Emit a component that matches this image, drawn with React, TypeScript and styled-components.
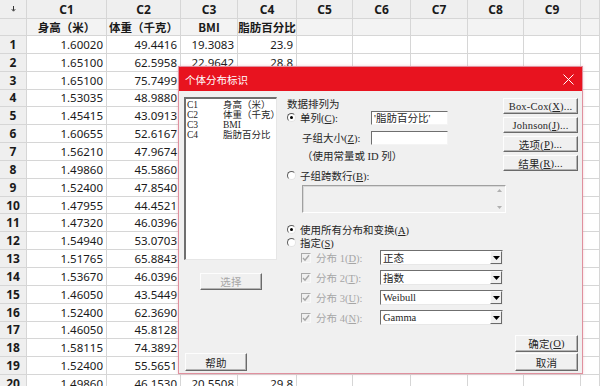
import React from 'react';
import styled, { createGlobalStyle } from 'styled-components';

const Global = createGlobalStyle`
  html, body { margin: 0; padding: 0; background: #fff; overflow: hidden; }
  body { width: 600px; height: 386px; font-family: "Noto Sans", "Noto Sans CJK SC", sans-serif; }
  * { box-sizing: border-box; }
`;

const Page = styled.div`
  position: relative;
  width: 600px;
  height: 386px;
  overflow: hidden;
  background: #fff;
`;

const Sheet = styled.div`
  display: grid;
  grid-template-columns: 27px 80px 74px 57px 59px 56px 58px 57px 56px 57px 1fr;
  grid-template-rows: 19px 17px repeat(20, 17.85px);
`;

type Kind = 'corner' | 'col' | 'name' | 'row' | 'data';

const Cell = styled.div<{ $kind: Kind }>`
  border-right: 1px solid #d6d6d6;
  border-bottom: 1px solid #d6d6d6;
  display: flex;
  align-items: center;
  overflow: hidden;
  white-space: nowrap;
  color: #1a1a1a;
  background: ${p => (p.$kind === 'data' ? '#fff' : p.$kind === 'name' ? '#f3f3f3' : '#efefef')};
  justify-content: ${p => (p.$kind === 'data' ? 'flex-end' : 'center')};
  padding-right: ${p => (p.$kind === 'data' ? '3px' : '0')};
  font-size: ${p => (p.$kind === 'data' ? '11.5px' : p.$kind === 'name' ? '11.5px' : '12px')};
  font-weight: ${p => (p.$kind === 'data' ? 400 : 700)};
  font-family: ${p => (p.$kind === 'name' ? '"Noto Sans CJK SC", sans-serif' : '"Noto Sans", sans-serif')};
`;

const heights = ['1.60020','1.65100','1.65100','1.53035','1.45415','1.60655','1.56210','1.49860','1.52400','1.47955','1.47320','1.54940','1.51765','1.53670','1.46050','1.52400','1.46050','1.58115','1.52400','1.49860'];
const weights = ['49.4416','62.5958','75.7499','48.9880','43.0913','52.6167','47.9674','45.5860','47.8540','44.4521','46.0396','53.0703','65.8843','46.0396','43.5449','62.3690','45.8128','74.3892','55.5651','46.1530'];
const fat: Record<number, string> = { 0: '23.9', 1: '28.8', 19: '29.8' };

const colNames = ['C1', 'C2', 'C3', 'C4', 'C5', 'C6', 'C7', 'C8', 'C9', ''];
const varNames = ['身高（米）', '体重（千克）', 'BMI', '脂肪百分比', '', '', '', '', '', ''];

/* ---------- Dialog ---------- */

const Dialog = styled.div`
  position: absolute;
  left: 178px;
  top: 66px;
  width: 405px;
  height: 308px;
  border: 1px solid #e0909e;
  background: #f0f0f0;
  box-shadow: 0 0 3px rgba(220, 120, 140, 0.35);
  display: flex;
  flex-direction: column;
  font-family: "Liberation Serif", "Noto Sans CJK SC", serif;
  font-size: 10.5px;
  color: #262626;
`;

const TitleBar = styled.div`
  height: 24px;
  flex: none;
  background: #e8131f;
  color: #fff;
  display: flex;
  align-items: center;
  justify-content: space-between;
  padding: 0 8px 0 6px;
  font-family: "Noto Sans CJK SC", sans-serif;
  font-size: 10.5px;
`;

const Body = styled.div`
  flex: 1;
  display: flex;
  padding: 6px 4px 2px 5px;
`;

const LeftCol = styled.div`
  width: 93px;
  display: flex;
  flex-direction: column;
  flex: none;
`;

const MidCol = styled.div`
  width: 216px;
  margin-left: 10px;
  display: flex;
  flex-direction: column;
  flex: none;
`;

const RightCol = styled.div`
  width: 75px;
  display: flex;
  flex-direction: column;
  flex: none;
  gap: 3px;
  padding-top: 1px;
`;

const ListBox = styled.div`
  height: 163px;
  background: #fff;
  border-style: solid;
  border-width: 2px 1px 1px 2px;
  border-color: #6f6f6f #e6e6e6 #e6e6e6 #6f6f6f;
  padding: 1px 0 0 1px;
  display: grid;
  grid-template-columns: 36px 1fr;
  grid-auto-rows: 10px;
  align-content: start;
  font-size: 9.5px;
  line-height: 10px;
`;

const ListText = styled.span`
  white-space: nowrap;
`;

const Button = styled.div<{ $w: number; $h: number; $off?: boolean }>`
  width: ${p => p.$w}px;
  height: ${p => p.$h}px;
  flex: none;
  display: flex;
  align-items: center;
  justify-content: center;
  background: #f0f0f0;
  border: 1px solid;
  border-color: #fdfdfd #6a6a6a #6a6a6a #fdfdfd;
  box-shadow: inset -1px -1px 0 #b4b4b4;
  color: ${p => (p.$off ? '#a6a6a6' : '#262626')};
  white-space: nowrap;
  letter-spacing: 0.2px;
`;

const SelectWrap = styled.div`
  margin: 13px 0 0 16px;
`;

const HelpWrap = styled.div`
  margin: auto 0 0 1px;
`;

const BottomButtons = styled.div`
  margin-top: auto;
  display: flex;
  flex-direction: column;
  align-items: flex-end;
  gap: 1px;
`;

const Row = styled.div<{ $h: number; $mt?: number; $indent?: number }>`
  height: ${p => p.$h}px;
  margin-top: ${p => p.$mt ?? 0}px;
  padding-left: ${p => p.$indent ?? 0}px;
  display: flex;
  align-items: center;
  white-space: nowrap;
  flex: none;
`;

const Label = styled.span<{ $w?: number; $off?: boolean }>`
  width: ${p => (p.$w ? `${p.$w}px` : 'auto')};
  flex: none;
  color: ${p => (p.$off ? '#a6a6a6' : '#262626')};
  white-space: nowrap;
`;

const RadioDot = styled.span<{ $on?: boolean }>`
  position: relative;
  width: 9px;
  height: 9px;
  flex: none;
  border-radius: 50%;
  border: 1px solid;
  border-color: #5e5e5e #e4e4e4 #e4e4e4 #5e5e5e;
  background: #fff;
  margin: 0 4px 0 0;
  &::after {
    content: '';
    display: ${p => (p.$on ? 'block' : 'none')};
    position: absolute;
    left: 2px;
    top: 2px;
    width: 3px;
    height: 3px;
    border-radius: 50%;
    background: #000;
  }
`;

const CheckBox = styled.span`
  width: 10px;
  height: 10px;
  flex: none;
  border: 1px solid;
  border-color: #a8a8a8 #f8f8f8 #f8f8f8 #a8a8a8;
  background: #f0f0f0;
  margin-right: 5px;
  display: flex;
  align-items: center;
  justify-content: center;
`;

const TextInput = styled.div<{ $w: number }>`
  width: ${p => p.$w}px;
  height: 14px;
  background: #fff;
  border: 1px solid;
  border-color: #6f6f6f #f4f4f4 #f4f4f4 #6f6f6f;
  display: flex;
  align-items: center;
  padding-left: 2px;
  font-size: 10.5px;
`;

const TextArea = styled.div`
  height: 28px;
  margin: 3px -3px 0 15px;
  border: 1px solid;
  border-color: #a0a0a0 #ffffff #ffffff #a0a0a0;
  box-shadow: inset 1px 1px 0 #d8d8d8;
  display: flex;
  justify-content: flex-end;
`;

const MiniScroll = styled.div`
  width: 12px;
  display: flex;
  flex-direction: column;
  justify-content: space-between;
  align-items: center;
  padding: 3px 0 3px;
`;

const Combo = styled.div`
  width: 123px;
  height: 15px;
  background: #fff;
  border: 1px solid;
  border-color: #6f6f6f #e8e8e8 #e8e8e8 #6f6f6f;
  display: flex;
  align-items: stretch;
`;

const ComboText = styled.span`
  flex: 1;
  padding-left: 2px;
  display: flex;
  align-items: center;
  font-size: 10.5px;
`;

const ComboArrow = styled.span`
  width: 12px;
  background: #f0f0f0;
  border: 1px solid;
  border-color: #fdfdfd #6a6a6a #6a6a6a #fdfdfd;
  display: flex;
  align-items: center;
  justify-content: center;
`;

const Arrow = () => (
  <svg width="7" height="4" viewBox="0 0 7 4">
    <path d="M0 0h7L3.5 4z" fill="#000" />
  </svg>
);

const Tri = ({ up }: { up?: boolean }) => (
  <svg width="5" height="3" viewBox="0 0 5 3">
    <path d={up ? 'M0 3h5L2.5 0z' : 'M0 0h5L2.5 3z'} fill="#b0b0b0" />
  </svg>
);

const Check = () => (
  <svg width="8" height="8" viewBox="0 0 8 8">
    <path d="M1 4l2 2.2L7 1.2" stroke="#a6a6a6" strokeWidth="1.4" fill="none" />
  </svg>
);

const CloseIcon = () => (
  <svg width="11" height="11" viewBox="0 0 11 11">
    <path d="M0.5 0.5l10 10M10.5 0.5l-10 10" stroke="#fff" strokeWidth="1" />
  </svg>
);

const Corner = () => (
  <svg width="5" height="6" viewBox="0 0 5 6">
    <path d="M2.5 0v4.5M0.8 3.2l1.7 2 1.7-2" stroke="#333" strokeWidth="1" fill="none" />
  </svg>
);

const dists = [
  { n: '1', k: 'D', v: '正态' },
  { n: '2', k: 'T', v: '指数' },
  { n: '3', k: 'U', v: 'Weibull' },
  { n: '4', k: 'N', v: 'Gamma' },
];

const listItems = [
  ['C1', '身高（米）'],
  ['C2', '体重（千克）'],
  ['C3', 'BMI'],
  ['C4', '脂肪百分比'],
];

function IdDialog() {
  return (
    <Dialog>
      <TitleBar>
        <span>个体分布标识</span>
        <CloseIcon />
      </TitleBar>
      <Body>
        <LeftCol>
          <ListBox>
            {listItems.map(([c, n]) => (
              <React.Fragment key={c}>
                <ListText>{c}</ListText>
                <ListText>{n}</ListText>
              </React.Fragment>
            ))}
          </ListBox>
          <SelectWrap>
            <Button $w={62} $h={17} $off>选择</Button>
          </SelectWrap>
          <HelpWrap>
            <Button $w={62} $h={18}>帮助</Button>
          </HelpWrap>
        </LeftCol>

        <MidCol>
          <Row $h={13}>数据排列为</Row>
          <Row $h={15}>
            <RadioDot $on />
            <Label $w={71}>单列(<u>C</u>):</Label>
            <TextInput $w={77}>'脂肪百分比'</TextInput>
          </Row>
          <Row $h={15} $mt={5} $indent={15}>
            <Label $w={69}>子组大小(<u>Z</u>):</Label>
            <TextInput $w={77} />
          </Row>
          <Row $h={14} $mt={3} $indent={15}>（使用常量或 ID 列）</Row>
          <Row $h={14} $mt={6}>
            <RadioDot />
            <Label>子组跨数行(<u>B</u>):</Label>
          </Row>
          <TextArea>
            <MiniScroll>
              <Tri up />
              <Tri />
            </MiniScroll>
          </TextArea>
          <Row $h={14} $mt={9}>
            <RadioDot $on />
            <Label>使用所有分布和变换(<u>A</u>)</Label>
          </Row>
          <Row $h={13}>
            <RadioDot />
            <Label>指定(<u>S</u>)</Label>
          </Row>
          {dists.map((d, i) => (
            <Row key={d.n} $h={15} $mt={i === 0 ? 1 : 5} $indent={14}>
              <CheckBox>
                <Check />
              </CheckBox>
              <Label $w={64} $off>
                分布 {d.n}(<u>{d.k}</u>):
              </Label>
              <Combo>
                <ComboText>{d.v}</ComboText>
                <ComboArrow>
                  <Arrow />
                </ComboArrow>
              </Combo>
            </Row>
          ))}
        </MidCol>

        <RightCol>
          <Button $w={75} $h={16}>Box-Cox(<u>X</u>)...</Button>
          <Button $w={75} $h={16}>Johnson(<u>J</u>)...</Button>
          <Button $w={75} $h={16}>选项(<u>P</u>)...</Button>
          <Button $w={75} $h={16}>结果(<u>R</u>)...</Button>
          <BottomButtons>
            <Button $w={63} $h={17}>确定(<u>O</u>)</Button>
            <Button $w={63} $h={18}>取消</Button>
          </BottomButtons>
        </RightCol>
      </Body>
    </Dialog>
  );
}

export default function App() {
  return (
    <Page>
      <Global />
      <Sheet>
        <Cell $kind="corner">
          <Corner />
        </Cell>
        {colNames.map((c, i) => (
          <Cell key={'h' + i} $kind="col">{c}</Cell>
        ))}
        <Cell $kind="row" />
        {varNames.map((n, i) => (
          <Cell key={'n' + i} $kind="name">{n}</Cell>
        ))}
        {heights.map((h, r) => {
          const bmi = (parseFloat(weights[r]) / (parseFloat(h) * parseFloat(h))).toFixed(4);
          const vals = [h, weights[r], bmi, fat[r] ?? '', '', '', '', '', '', ''];
          return (
            <React.Fragment key={'r' + r}>
              <Cell $kind="row">{r + 1}</Cell>
              {vals.map((v, c) => (
                <Cell key={c} $kind="data">{v}</Cell>
              ))}
            </React.Fragment>
          );
        })}
      </Sheet>
      <IdDialog />
    </Page>
  );
}
